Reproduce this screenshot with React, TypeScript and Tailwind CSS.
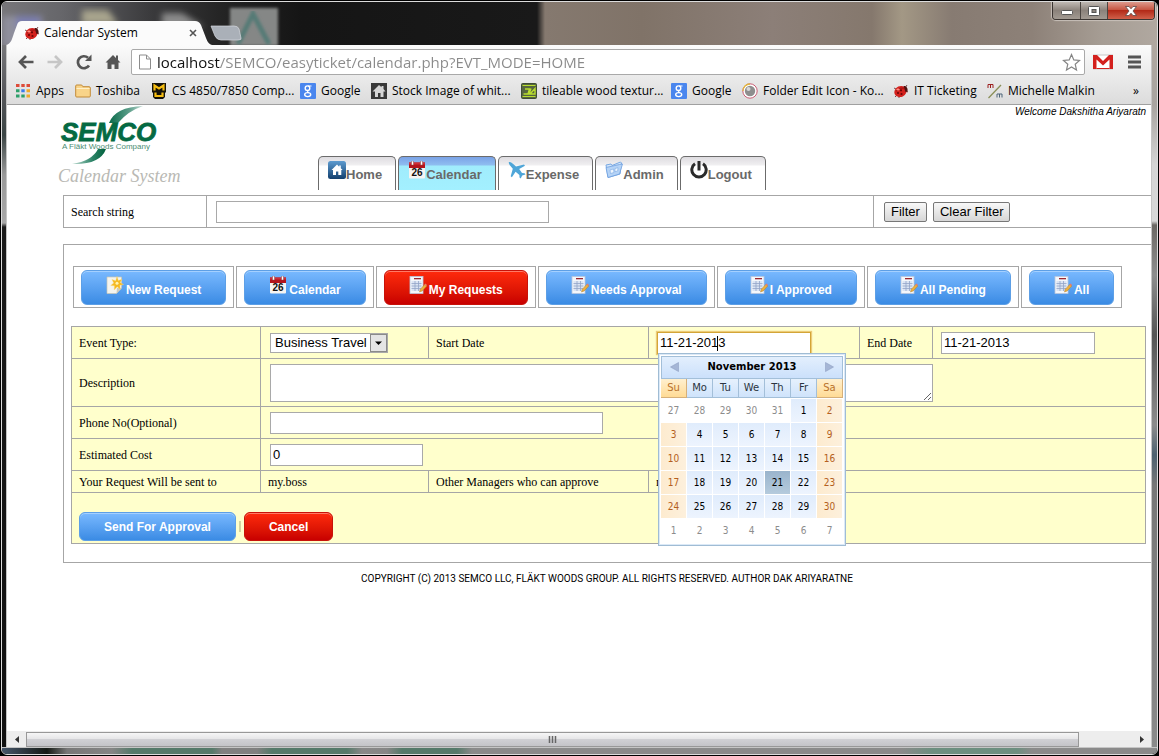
import React from "react";

type IconProps = { className?: string };

const LadyBug = ({ className = "" }: IconProps) => (
  <svg className={className} width="16" height="16" viewBox="0 0 16 16" aria-hidden="true">
    <path d="M4 12l-2 2M6 13l0 2M12 5l2-3M13 8l2 1M3 6L1 5" stroke="#5a2020" strokeWidth=".8" fill="none" />
    <ellipse cx="7.500" cy="8.500" rx="6.300" ry="5.400" transform="rotate(-25 7.500 8.500)" fill="#d3201c" />
    <path d="M10.500 3c3 0 4.500 2 4 5.500l-2 .5z" fill="#4c1210" />
    <path d="M3 8q4-4 9-3" stroke="#8a0c0c" strokeWidth=".8" fill="none" />
    <circle cx="5" cy="10" r="1.100" fill="#6c0707" />
    <circle cx="8.500" cy="11" r="1.100" fill="#6c0707" />
    <circle cx="8" cy="7.300" r="1.100" fill="#6c0707" />
    <ellipse cx="5" cy="6.500" rx="1.700" ry="1.100" fill="#ff8b80" />
  </svg>
);

const DateIcon = ({ className = "" }: IconProps) => (
  <svg className={className} width="18" height="18" viewBox="0 0 18 18" aria-hidden="true">
    <rect x="1" y="2" width="16" height="15.500" rx="1" fill="#f6f4f1" />
    <path d="M1 1.500h16V7H1z" fill="#b3141c" />
    <path d="M1 1.500h16v2H1z" fill="#cf3038" />
    <path d="M3.500 0h2v4h-2zM12.500 0h2v4h-2z" fill="#fff" stroke="#8d4b4b" strokeWidth=".5" />
    <text x="9" y="15" textAnchor="middle" fontSize="10" fontWeight="700" fontFamily="Liberation Sans, sans-serif" fill="#111">26</text>
  </svg>
);

const DocIcon = ({ className = "" }: IconProps) => (
  <svg className={className} width="18" height="18" viewBox="0 0 18 18" aria-hidden="true">
    <rect x="1" y=".5" width="13" height="17" fill="#f4f7fb" stroke="#b9c5dc" strokeWidth=".8" />
    <rect x="5" y="2" width="7" height="1.300" fill="#9b2a32" />
    <path d="M2.500 5h10v10h-10z" fill="#dbe4f3" />
    <path d="M2.500 7.500h10M2.500 10h10M2.500 12.500h10M6 5v10M9.500 5v10" stroke="#93a5c8" strokeWidth=".8" />
    <path d="M10.500 16l.8-2.800 4.700-5 1.800 1.700-4.600 5z" fill="#eeb13e" stroke="#b07f2c" strokeWidth=".5" />
    <path d="M15.500 8.500l1-1 1.500 1.500-1 1z" fill="#e77b6b" />
  </svg>
);

const NewDocIcon = ({ className = "" }: IconProps) => (
  <svg className={className} width="18" height="18" viewBox="0 0 18 18" aria-hidden="true">
    <path d="M1 1h14.500v11l-5 5.500H1z" fill="#f5f4ee" stroke="#c9c5b5" strokeWidth=".7" />
    <path d="M15.500 12H11l-.5 5.500z" fill="#cfcaba" />
    <path d="M11 .5l1.300 4 3.700-1.300-1.800 3.300 3.300 2-3.600.8.4 4.200-3.100-2.700-3 3.200.2-4.200-3.700-.3 3-2.400L5.900 3.400l3.800 1.400z" fill="#f5b921" stroke="#fbdc7c" strokeWidth=".4" />
    <circle cx="11" cy="7.300" r="1.500" fill="#fff3b0" />
  </svg>
);

const HouseIcon = () => (
  <svg width="18" height="18" viewBox="0 0 18 18" aria-hidden="true">
    <defs>
      <linearGradient id="house" x1="0" y1="0" x2="0" y2="1">
        <stop offset="0" stopColor="#5d9bd0" />
        <stop offset="1" stopColor="#123f6e" />
      </linearGradient>
    </defs>
    <rect width="18" height="18" rx="2.500" fill="url(#house)" />
    <path d="M9 3.500L3.500 9H5v5h3v-3.500h2.300V14h3V9h1.300l-1.800-1.800V4.500h-1.600v1.200z" fill="#fff" />
  </svg>
);

const PlaneIcon = () => (
  <svg width="18" height="18" viewBox="0 0 18 18" aria-hidden="true">
    <path d="M1 1c1.500-.5 3 .8 4.500 2.200L8 5.500l8-2 1 1.200-5.800 3.400L14 12l2.600.3.900 1.200-3.300 1-1.500 3-1.200-1-.1-2.600-3.800-3.100-3.700 5.500-1.200-1L4.800 7.700 2.500 5C1.300 3.500.3 2 1 1z" fill="#4fa6d8" />
  </svg>
);

const FolderIcon = () => (
  <svg width="18" height="18" viewBox="0 0 18 18" aria-hidden="true">
    <path d="M1 4l5-1 1 1.500L15.500 1l1 1-1.500 11L3 16.500z" fill="#d3e5fa" stroke="#78a8e2" />
    <path d="M1 6.500l13.500-3L17.500 3l-3 10L3 16.500z" fill="#b5d3f6" stroke="#6f9fe0" strokeWidth=".8" />
    <path d="M5 9l3.500-1 .5 3.500-3.500 1zM10 7.500l3-.8-.3 3.300-2.700.7z" fill="#eef6ff" stroke="#7ba9e2" strokeWidth=".6" />
  </svg>
);

const PowerIcon = () => (
  <svg width="18" height="18" viewBox="0 0 18 18" aria-hidden="true">
    <path d="M5 2.800a7.200 7.200 0 1 0 8 0" fill="none" stroke="#2b2b2b" strokeWidth="3" />
    <path d="M9 0v9.500" stroke="#2b2b2b" strokeWidth="3" />
  </svg>
);

const GoogleIcon = () => (
  <svg width="16" height="16" viewBox="0 0 16 16" aria-hidden="true">
    <rect width="16" height="16" rx="1" fill="#4a86ee" />
    <circle cx="7.500" cy="5.200" r="2.300" fill="none" stroke="#fff" strokeWidth="1.400" />
    <ellipse cx="7.700" cy="11.600" rx="3" ry="2" fill="none" stroke="#fff" strokeWidth="1.400" />
    <path d="M8 3h3.500M8.500 7.300q-2 1.200.3 2.400" stroke="#fff" strokeWidth="1.200" fill="none" />
  </svg>
);

const AppsIcon = () => (
  <svg width="16" height="16" viewBox="0 0 16 16" aria-hidden="true">
    <path d="M1 1h3.500v3H1zM6.300 1h3.400v3H6.300zM11.500 1H15v3h-3.500z" fill="#dd4b39" />
    <path d="M1 6.300h3.500v3H1z" fill="#2da06a" />
    <path d="M6.300 6.300h3.400v3H6.300z" fill="#3b7ded" />
    <path d="M11.500 6.300H15v3h-3.500zM11.500 11.500H15v3h-3.500z" fill="#f0a92c" />
    <path d="M1 11.500h3.500v3H1zM6.300 11.500h3.400v3H6.300z" fill="#2da06a" />
  </svg>
);

const YellowFolder = () => (
  <svg width="16" height="16" viewBox="0 0 16 16" aria-hidden="true">
    <path d="M.7 3q0-1 1-1h5l1.200 1.700H14q1.300 0 1.300 1.300v8q0 1-1 1H1.700q-1 0-1-1z" fill="#f9d489" stroke="#c28b38" />
    <path d="M1.500 5.500h13" stroke="#fff0c8" />
  </svg>
);

const MuIcon = () => (
  <svg width="16" height="16" viewBox="0 0 16 16" aria-hidden="true">
    <path d="M1 0h14v9l-1 1v4l-2 2H4l-2-2v-4L1 9z" fill="#15120a" />
    <path d="M3.500 7.500V2.500l4.500 3 4.500-3v5M4.500 9.500V13h7V9.500" fill="none" stroke="#f5bd12" strokeWidth="2.200" />
  </svg>
);

const StockIcon = () => (
  <svg width="16" height="16" viewBox="0 0 16 16" aria-hidden="true">
    <rect width="16" height="16" fill="#393939" />
    <path d="M8 2L1.500 8.500H4V14h3v-4h2.500v4h3V8.500h2L12.500 6V3h-2v1.300z" fill="#d6d6d6" />
  </svg>
);

const DeviantIcon = () => (
  <svg width="16" height="16" viewBox="0 0 16 16" aria-hidden="true">
    <rect x=".5" y=".5" width="15" height="15" rx="1" fill="#56663f" stroke="#3f4e34" />
    <path d="M1.500 2.500h13M1.500 13.500h13" stroke="#b9de2e" strokeWidth="1.200" />
    <path d="M2.500 11h4.500L8.500 6H4M9 11l5-5.500V11H8l2-5.500" fill="none" stroke="#b9de2e" strokeWidth="1.400" />
  </svg>
);

const BallIcon = () => (
  <svg width="16" height="16" viewBox="0 0 16 16" aria-hidden="true">
    <circle cx="8" cy="8" r="7.200" fill="#fff" stroke="#c95d74" />
    <path d="M1 8a7 7 0 0 1 7-7" fill="none" stroke="#e1b53f" strokeWidth="1.300" />
    <circle cx="8" cy="8" r="5.200" fill="#8e8e8e" />
    <circle cx="6.500" cy="6" r="2" fill="#d8d8d8" />
  </svg>
);

const MmIcon = () => (
  <svg width="16" height="16" viewBox="0 0 16 16" aria-hidden="true">
    <path d="M1 5V1.500h5V5M3.500 1.500V5" fill="none" stroke="#9c2020" />
    <path d="M1.500 15L14 2" stroke="#8a8f58" strokeWidth="1.300" />
    <path d="M10 14.500V11h5v3.500M12.500 11v3.500" fill="none" stroke="#4d6478" />
  </svg>
);

const bookmarks = [
  { label: "Apps", icon: <AppsIcon />, width: "w-[60px]" },
  { label: "Toshiba", icon: <YellowFolder />, width: "w-[76px]" },
  { label: "CS 4850/7850 Comp...", icon: <MuIcon />, width: "w-[149px]" },
  { label: "Google", icon: <GoogleIcon />, width: "w-[71px]" },
  { label: "Stock Image of whit...", icon: <StockIcon />, width: "w-[150px]" },
  { label: "tileable wood textur...", icon: <DeviantIcon />, width: "w-[150px]" },
  { label: "Google", icon: <GoogleIcon />, width: "w-[71px]" },
  { label: "Folder Edit Icon - Ko...", icon: <BallIcon />, width: "w-[151px]" },
  { label: "IT Ticketing", icon: <LadyBug />, width: "w-[94px]" },
  { label: "Michelle Malkin", icon: <MmIcon />, width: "w-[110px]" },
];

function TitleBar() {
  return (
    <div className="relative flex h-[43px] shrink-0 justify-between overflow-hidden bg-[linear-gradient(90deg,#77767a_0,#66666a_60px,#3a3a3c_150px,#242424_220px,#151515_300px,#191919_535px,#85796f_543px,#807368_640px,#8c7f78_770px,#85786d_870px,#a39885_900px,#877b72_950px,#8d8178_1030px,#a69d94_1100px,#b0a8a0_100%)]">
      <svg className="absolute inset-0" width="300" height="43" aria-hidden="true">
        <defs>
          <filter id="haze"><feGaussianBlur stdDeviation="3" /></filter>
          <filter id="soft"><feGaussianBlur stdDeviation="1.500" /></filter>
        </defs>
        <g filter="url(#haze)">
          <path d="M0 14h40v30H0z" fill="#8f8f9c" />
          <path d="M14 14h24v12H14z" fill="#7b7fb0" />
          <path d="M80 8h26l10 14H80z" fill="#a8a48d" />
          <path d="M160 11h20l22 14h-42z" fill="#8b8b8b" />
        </g>
        <rect x="228" y="6" width="48" height="38" fill="#858786" filter="url(#soft)" />
        <path d="M236 42L251 12l16 30" fill="none" stroke="#557a76" strokeWidth="5" filter="url(#soft)" />
      </svg>
      <div className="relative mt-[19px] flex h-[24px] w-[234px] items-center pr-[39px] pl-[22px]">
        <svg className="absolute inset-0" width="244" height="24" viewBox="0 0 244 24" aria-hidden="true">
          <path d="M4 24C9 23 10 18 12 12L15 4Q16 0 20 0H193Q197 0 199 4L204 17Q206 23 210 24z" fill="#fbfbfb" />
          <path d="M209 5H232Q236 5 237 8L239 17Q240 19 236 19H219Q215 19 213 15z" fill="#aab0b8" stroke="#d5d9de" strokeWidth=".7" />
        </svg>
        <LadyBug className="relative" />
        <span className="relative ml-[4px] grow font-['Open_Sans',sans-serif] text-[12px] leading-[16px] whitespace-nowrap text-black">Calendar System</span>
        <button aria-label="Close tab" className="relative">
          <svg width="8" height="8" viewBox="0 0 8 8"><path d="M1 1l6 6M7 1L1 7" stroke="#555" strokeWidth="1.600" /></svg>
        </button>
      </div>
      <div className="relative mr-[2px] flex h-[18px] w-[103px] overflow-hidden rounded-b-[4px] border border-t-0 border-[#3b3532] shadow-[0_0_1px_1px_#c8c0ba]">
        <button aria-label="Minimize" className="flex w-[28px] items-center justify-center border-r border-[#4a4440] bg-linear-to-b from-[#c0b9b3] via-[#8b827b] to-[#a29a92] pt-[3px]">
          <svg width="12" height="5"><rect x=".5" y=".5" width="11" height="4" rx="1" fill="#fff" stroke="#555" /></svg>
        </button>
        <button aria-label="Maximize" className="flex w-[27px] items-center justify-center border-r border-[#4a4440] bg-linear-to-b from-[#c0b9b3] via-[#8b827b] to-[#a29a92]">
          <svg width="12" height="10"><rect x=".5" y=".5" width="11" height="9" rx="1" fill="#fff" stroke="#555" /><rect x="4" y="3.500" width="4" height="3" fill="#8d857f" stroke="#555" /></svg>
        </button>
        <button aria-label="Close" className="flex grow items-center justify-center bg-[linear-gradient(#dd9a8c,#c75643_45%,#b32a18_50%,#d0604a)]">
          <svg width="12" height="10"><path d="M.5.500h3.500l2 2.300 2-2.300h3.500L8 5l3.500 4.500H8L6 7.200 4 9.500H.5L4 5z" fill="#fff" stroke="#5c4644" strokeWidth=".8" /></svg>
        </button>
      </div>
    </div>
  );
}

function Chrome() {
  return (
    <div className="shrink-0 border-b border-[#a0a0a0] bg-linear-to-b from-[#fbfbfb] to-[#dcdcdc] font-['Open_Sans',sans-serif]">
      <div className="flex h-[35px] items-center pr-[10px] pb-[1px] pl-[11px]">
        <div className="flex gap-[13px]">
          <button aria-label="Back"><svg width="16" height="16" viewBox="0 0 16 16"><path d="M8 2L2 8l6 6M2 8h13.500" fill="none" stroke="#555" strokeWidth="2.700" /></svg></button>
          <button aria-label="Forward"><svg width="16" height="16" viewBox="0 0 16 16"><path d="M8 2l6 6-6 6M14 8H.5" fill="none" stroke="#c6c6c6" strokeWidth="2.700" /></svg></button>
          <button aria-label="Reload"><svg width="16" height="16" viewBox="0 0 16 16"><path d="M13 11.500A6 6 0 1 1 12 3.800" fill="none" stroke="#555" strokeWidth="2.700" /><path d="M15.500.500V7H9z" fill="#555" /></svg></button>
          <button aria-label="Home page"><svg width="16" height="16" viewBox="0 0 16 16"><path d="M8 1L.5 8.500h2V15H6.500v-4.500h3V15h4V8.500h2L13 6V1.500h-2V4z" fill="#555" /></svg></button>
        </div>
        <div className="ml-[10px] flex h-[26px] grow items-center rounded-[2px] border border-[#a9a9a9] bg-white pr-[3px] pl-[6px]">
          <svg width="14" height="16" viewBox="0 0 14 16" aria-hidden="true"><path d="M1.500 1h7l4 4v10h-11zM8.500 1v4h4" fill="#fff" stroke="#8c8c8c" /></svg>
          <input
            aria-label="Address"
            defaultValue="localhost/SEMCO/easyticket/calendar.php?EVT_MODE=HOME"
            className="ml-[5px] h-[24px] grow bg-[linear-gradient(90deg,#111_63px,#8a8a8a_63px)] bg-clip-text text-[15px] text-transparent outline-none"
          />
          <button aria-label="Bookmark"><svg width="19" height="19" viewBox="0 0 19 19"><path d="M9.500 1.500l2.300 5.400 5.700.5-4.300 3.800 1.300 5.700-5-3-5 3 1.300-5.700L1.500 7.400l5.700-.5z" fill="#fff" stroke="#858585" strokeWidth="1.200" /></svg></button>
        </div>
        <button aria-label="Gmail" className="ml-[8px]"><svg width="20" height="16" viewBox="0 0 20 16"><rect x=".5" y="1" width="19" height="14" fill="#fff" stroke="#c8c8c8" /><path d="M0 1h4l6 6 6-6h4v14h-3.500V5.500L10 11.500 3.500 5.500V15H0z" fill="#d3201d" /><path d="M3.500 14.500h13" stroke="#d3201d" /></svg></button>
        <button aria-label="Menu" className="ml-[15px]"><svg width="13" height="14" viewBox="0 0 13 14"><path d="M0 2h13M0 7h13M0 12h13" stroke="#555" strokeWidth="3" /></svg></button>
      </div>
      <div className="flex h-[24px] items-center pb-[3px] pl-[8px] text-[12px] leading-[16px] text-black">
        {bookmarks.map((b, i) => (
          <a key={i} href="#" className={`flex shrink-0 items-center gap-[5px] whitespace-nowrap ${b.width}`}>
            {b.icon}
            <span>{b.label}</span>
          </a>
        ))}
        <button aria-label="More bookmarks" className="ml-auto pr-[12px]">»</button>
      </div>
    </div>
  );
}

function Logo() {
  return (
    <div className="flex w-[136px] flex-col">
      <svg width="106" height="61" viewBox="0 0 106 61" role="img" aria-label="SEMCO">
        <defs>
          <linearGradient id="swTop" x1="0" y1="0" x2="1" y2="0">
            <stop offset="0" stopColor="#0a6b4a" />
            <stop offset=".6" stopColor="#5d9f8b" />
            <stop offset="1" stopColor="#c3dbd3" />
          </linearGradient>
          <linearGradient id="swBot" x1="0" y1="0" x2="1" y2="0">
            <stop offset="0" stopColor="#b9d8cd" />
            <stop offset=".6" stopColor="#2d8468" />
            <stop offset="1" stopColor="#00603c" />
          </linearGradient>
        </defs>
        <path d="M51 18Q57 2 85 1Q70 6 60 18z" fill="url(#swTop)" />
        <path d="M14 59Q34 56 40 44H48Q42 60 14 59z" fill="url(#swBot)" />
        <text x="3" y="36" fontSize="26" fontWeight="700" fontStyle="italic" fontFamily="Liberation Sans, sans-serif" fill="#056a43" stroke="#056a43" strokeWidth=".8">SEMCO</text>
        <text x="4" y="44" fontSize="8" fontFamily="Liberation Sans, sans-serif" fill="#4b8d73">A Fläkt Woods Company</text>
      </svg>
      <span className="font-['Liberation_Serif',serif] text-[18px] leading-[20px] whitespace-nowrap text-[#b9b9b4] italic">Calendar System</span>
    </div>
  );
}

const tabs = [
  { label: "Home", icon: <HouseIcon /> },
  { label: "Calendar", icon: <DateIcon />, active: true },
  { label: "Expense", icon: <PlaneIcon /> },
  { label: "Admin", icon: <FolderIcon /> },
  { label: "Logout", icon: <PowerIcon /> },
];

function Header() {
  return (
    <header className="flex h-[90px] pl-[51px]">
      <Logo />
      <nav className="ml-[124px] flex items-end gap-[2px] pb-[5px]">
        {tabs.map((t) => (
          <a
            key={t.label}
            href="#"
            className={`flex h-[34px] rounded-t-[5px] border border-b-0 border-[#6b6b6b] pt-[4px] pr-[13px] pl-[9px] font-['Liberation_Sans',sans-serif] text-[13px] font-bold text-[#696969] ${
              t.active
                ? "bg-[linear-gradient(#7aa2e6,#8fbdf0_8px,#a0ecfc_9px,#a3f0ff)]"
                : "bg-[linear-gradient(#dedce0,#f0eff1_8px,#ffffff_9px)]"
            }`}
          >
            {t.icon}
            <span className="mt-[4px] leading-[20px]">{t.label}</span>
          </a>
        ))}
      </nav>
      <p className="ml-auto w-[136px] overflow-hidden pt-[1px] font-['Liberation_Sans',sans-serif] text-[10px] leading-[12px] whitespace-nowrap text-black italic">
        Welcome Dakshitha Ariyaratn
      </p>
    </header>
  );
}

const field = "block h-[22px] border border-[#a9a9a9] bg-white px-[2px] font-['Liberation_Sans',sans-serif] text-[13px] text-black outline-none";
const grayButton = "h-[20px] rounded-[2px] border border-[#777] bg-linear-to-b from-[#f8f8f8] to-[#d6d6d6] px-[6px] font-['Liberation_Sans',sans-serif] text-[13px] leading-[18px] text-black";
const blue = "border-[#5d9fe6] bg-linear-to-b from-[#79b9ff] to-[#3a8be4] shadow-[inset_0_1px_0_#a5d0ff]";
const red = "border-[#c81209] bg-linear-to-b from-[#ff2a0d] to-[#c80000] shadow-[inset_0_1px_0_#ff7a66]";
const pill = "flex items-center justify-center gap-[2px] rounded-[6px] border px-[24px] font-['Liberation_Sans',sans-serif] text-[12px] font-bold whitespace-nowrap text-white";

const actions = [
  { label: "New Request", icon: <NewDocIcon className="mb-[6px]" />, tone: blue },
  { label: "Calendar", icon: <DateIcon className="mb-[6px]" />, tone: blue },
  { label: "My Requests", icon: <DocIcon className="mb-[6px]" />, tone: red },
  { label: "Needs Approval", icon: <DocIcon className="mb-[6px]" />, tone: blue },
  { label: "I Approved", icon: <DocIcon className="mb-[6px]" />, tone: blue },
  { label: "All Pending", icon: <DocIcon className="mb-[6px]" />, tone: blue },
  { label: "All", icon: <DocIcon className="mb-[6px]" />, tone: blue },
];

const weekdays = ["Su", "Mo", "Tu", "We", "Th", "Fr", "Sa"];
const weeks = [
  [27, 28, 29, 30, 31, 1, 2],
  [3, 4, 5, 6, 7, 8, 9],
  [10, 11, 12, 13, 14, 15, 16],
  [17, 18, 19, 20, 21, 22, 23],
  [24, 25, 26, 27, 28, 29, 30],
  [1, 2, 3, 4, 5, 6, 7],
];

function dayTone(week: number, col: number, day: number) {
  if ((week === 0 && day > 20) || week === 5) return "bg-white text-[#8c8c8c]";
  if (day === 21) return "bg-linear-to-b from-[#9ab4cc] to-[#b5cbdd] text-black";
  if (col === 0 || col === 6) return "bg-linear-to-r from-[#fdebcf] to-[#fdf0dc] text-[#b45f20]";
  return "bg-linear-to-b from-[#e0ecfc] to-[#edf4fe] text-black";
}

function DatePicker() {
  return (
    <div className="absolute top-[21px] left-[1px] z-10 w-[188px] border border-[#a0bcd4] bg-white font-['DejaVu_Sans',sans-serif]">
      <div className="border border-[#dbe9f7] pb-[2px]">
        <div className="mx-[1px] mt-[1px] flex h-[23px] items-center justify-between border border-[#a3bfd9] bg-linear-to-b from-[#e3effd] to-[#cbe0fb] px-[8px]">
          <button type="button" aria-label="Previous month"><svg width="9" height="10"><path d="M8.500.500v9L.5 5z" fill="#a5b6d6" stroke="#8ea0c2" strokeWidth=".6" /></svg></button>
          <span className="text-[10px] leading-[20px] font-bold text-black">November 2013</span>
          <button type="button" aria-label="Next month"><svg width="9" height="10"><path d="M.5.500v9L8.500 5z" fill="#a5b6d6" stroke="#8ea0c2" strokeWidth=".6" /></svg></button>
        </div>
        <table className="mx-[1px] w-[182px] table-fixed border-separate border-spacing-0">
          <thead>
            <tr>
              {weekdays.map((d, i) => (
                <th
                  key={d}
                  className={`h-[19px] border-r border-b p-0 text-center text-[10px] leading-[18px] font-normal ${
                    i === 0 || i === 6
                      ? "border-[#d6b07a] bg-linear-to-b from-[#fff0cf] to-[#ffdb95] text-[#b9722c]"
                      : "border-[#a3bfd9] bg-linear-to-b from-[#e6f1fd] to-[#cfe3fb] text-[#2b3440]"
                  }`}
                >
                  {d}
                </th>
              ))}
            </tr>
          </thead>
          <tbody>
            {weeks.map((w, r) => (
              <tr key={r}>
                {w.map((d, c) => (
                  <td key={c} className="h-[24px] border-t border-r border-white p-0">
                    <button type="button" className={`block h-[23px] w-full pt-[1px] text-center font-['DejaVu_Sans_Condensed','DejaVu_Sans',sans-serif] text-[10px] leading-[22px] ${dayTone(r, c, d)}`}>{d}</button>
                  </td>
                ))}
              </tr>
            ))}
          </tbody>
        </table>
      </div>
    </div>
  );
}

function RequestForm() {
  const cell = "border border-[#a6a6a6] px-[7px] py-0 text-left font-normal";
  return (
    <form className="mt-[18px] mr-[5px]" onSubmit={(e) => e.preventDefault()}>
      <table className="w-full table-fixed border-collapse bg-[#ffffcc] text-[12px] leading-[16px]">
        <colgroup>
          <col className="w-[189px]" />
          <col className="w-[168px]" />
          <col className="w-[220px]" />
          <col className="w-[211px]" />
          <col className="w-[73px]" />
          <col />
        </colgroup>
        <tbody>
          <tr className="h-[32px]">
            <th className={cell}><label htmlFor="type">Event Type:</label></th>
            <td className={cell}>
              <div className="relative ml-[2px] w-[118px]">
                <select id="type" className="block h-[20px] w-full appearance-none border border-[#a9a9a9] bg-white pl-[4px] font-['Liberation_Sans',sans-serif] text-[13px] leading-[18px] text-black">
                  <option>Business Travel</option>
                </select>
                <svg className="pointer-events-none absolute top-[1px] right-[1px]" width="17" height="18" aria-hidden="true">
                  <rect x=".5" y=".5" width="16" height="17" fill="#e4e4e4" stroke="#8a8a8a" />
                  <path d="M5 7.500h7L8.500 11z" fill="#000" />
                </svg>
              </div>
            </td>
            <th className={cell}><label htmlFor="start">Start Date</label></th>
            <td className={cell}>
              <div className="relative ml-[1px] w-[154px]">
                <input id="start" defaultValue="11-21-2013" className="block h-[22px] w-full border border-[#d3a537] bg-white px-[2px] font-['Liberation_Sans',sans-serif] text-[13px] text-black shadow-[0_0_1px_1px_#eccb78] outline-none" />
                <span className="absolute top-[4px] left-[60px] h-[15px] w-px bg-black" />
                <DatePicker />
              </div>
            </td>
            <th className={cell}><label htmlFor="end">End Date</label></th>
            <td className={cell}><input id="end" defaultValue="11-21-2013" className={`${field} ml-[1px] w-[154px]`} /></td>
          </tr>
          <tr className="h-[48px]">
            <th className={cell}><label htmlFor="desc">Description</label></th>
            <td className={cell} colSpan={5}><textarea id="desc" className="ml-[2px] block h-[38px] w-[663px] resize border border-[#a9a9a9] bg-white outline-none" /></td>
          </tr>
          <tr className="h-[32px]">
            <th className={cell}><label htmlFor="phone">Phone No(Optional)</label></th>
            <td className={cell} colSpan={5}><input id="phone" className={`${field} ml-[2px] w-[333px]`} /></td>
          </tr>
          <tr className="h-[32px]">
            <th className={cell}><label htmlFor="cost">Estimated Cost</label></th>
            <td className={cell} colSpan={5}><input id="cost" defaultValue="0" className={`${field} ml-[2px] w-[153px]`} /></td>
          </tr>
          <tr className="h-[22px]">
            <th className={cell}>Your Request Will be sent to</th>
            <td className={cell}>my.boss</td>
            <td className={cell}>Other Managers who can approve</td>
            <td className={cell} colSpan={3}>m</td>
          </tr>
          <tr className="h-[51px]">
            <td className={`${cell} align-bottom`} colSpan={6}>
              <div className="flex items-center gap-[3px] pb-[2px]">
                <button type="submit" className={`${pill} h-[29px] ${blue}`}>Send For Approval</button>
                <span className="h-[11px] w-[2px] bg-[#d3d3a0]" />
                <button type="button" className={`${pill} h-[29px] ${red}`}>Cancel</button>
              </div>
            </td>
          </tr>
        </tbody>
      </table>
    </form>
  );
}

function ScrollBar() {
  return (
    <div className="flex h-[16px] shrink-0 items-center bg-[#ededed]">
      <button aria-label="Scroll left" className="flex w-[19px] justify-center"><svg width="4" height="7"><path d="M4 0v7L0 3.500z" fill="#333" /></svg></button>
      <div className="flex h-[15px] grow items-center justify-center border border-[#989898] bg-[linear-gradient(#f6f6f6,#e6e6e8_45%,#d0d0d4_50%,#c4c4c8)]">
        <svg width="9" height="7" aria-hidden="true"><path d="M1.500 0v7M4.500 0v7M7.500 0v7" stroke="#666" strokeWidth="1.500" /></svg>
      </div>
      <button aria-label="Scroll right" className="flex w-[72px] justify-end pr-[7px]"><svg width="4" height="7"><path d="M0 0v7l4-3.500z" fill="#333" /></svg></button>
    </div>
  );
}

export default function App() {
  return (
    <div className="h-screen overflow-hidden bg-black p-px">
      <div className="flex h-full flex-col overflow-hidden rounded-[6px] border border-[#dcdcdc]">
        <TitleBar />
        <div className="flex min-h-0 grow">
          <div className="w-[5px] shrink-0 border-r border-[#c5c5c5] bg-[linear-gradient(#77777a_0,#55565a_50px,#3a4444_90px,#9a9a9a_130px,#a8a8a8_178px,#1a1a1a_182px,#101010_100%)]" />
          <div className="flex min-w-0 grow flex-col">
            <Chrome />
            <main className="min-h-0 grow overflow-hidden bg-white font-['Liberation_Serif',serif] text-[12px] text-black">
              <Header />
              <section className="ml-[56px] flex h-[33px] items-stretch border border-r-0 border-[#a6a6a6]">
                <label htmlFor="search" className="flex w-[143px] items-center border-r border-[#a6a6a6] pl-[7px]">Search string</label>
                <div className="flex grow items-center pl-[9px]">
                  <input id="search" className={`${field} w-[333px]`} />
                </div>
                <div className="flex w-[278px] items-center gap-[6px] border-l border-[#a6a6a6] pl-[10px]">
                  <button className={grayButton}>Filter</button>
                  <button className={grayButton}>Clear Filter</button>
                </div>
              </section>
              <section className="mt-[16px] ml-[56px] border border-r-0 border-[#a6a6a6] pt-[21px] pb-[18px] pl-[7px]">
                <div className="ml-[2px] flex gap-[2px]">
                  {actions.map((a) => (
                    <div key={a.label} className="h-[42px] border border-[#a6a6a6] px-[7px] py-[3px]">
                      <button className={`${pill} h-[35px] ${a.tone}`}>
                        {a.icon}
                        <span className="pt-[5px]">{a.label}</span>
                      </button>
                    </div>
                  ))}
                </div>
                <RequestForm />
              </section>
              <footer className="mt-[10px] ml-[56px] text-center font-['Roboto',sans-serif] text-[10px] leading-[12px] uppercase">
                Copyright (C) 2013 SEMCO LLC, Fläkt Woods Group. All Rights Reserved. Author Dak Ariyaratne
              </footer>
            </main>
            <ScrollBar />
          </div>
          <div className="w-[6px] shrink-0 border-l border-[#c5c5c5] bg-[linear-gradient(#b0a8a0_0,#a8a4a0_60px,#d5d5d5_120px,#d8d8d8_176px,#6c6864_180px,#8e8e8e_230px,#555_290px,#8c8c8c_380px,#4e6270_410px,#777_440px,#8a8a8a_100%)]" />
        </div>
        <div className="h-[7px] shrink-0 border-t border-[#c5c5c5] bg-[linear-gradient(90deg,#47576b_0,#151a15_45px,#777_65px,#858585_110px,#557a6a_130px,#557a6a_210px,#808080_220px,#808080_255px,#557a6a_270px,#557a6a_345px,#888_360px,#868686_385px,#557a6a_400px,#557a6a_455px,#8a8a8a_470px,#8a8a8a_900px,#6d8f80_930px,#6d8f80_1015px,#8a8a8a_1030px)]" />
      </div>
    </div>
  );
}
